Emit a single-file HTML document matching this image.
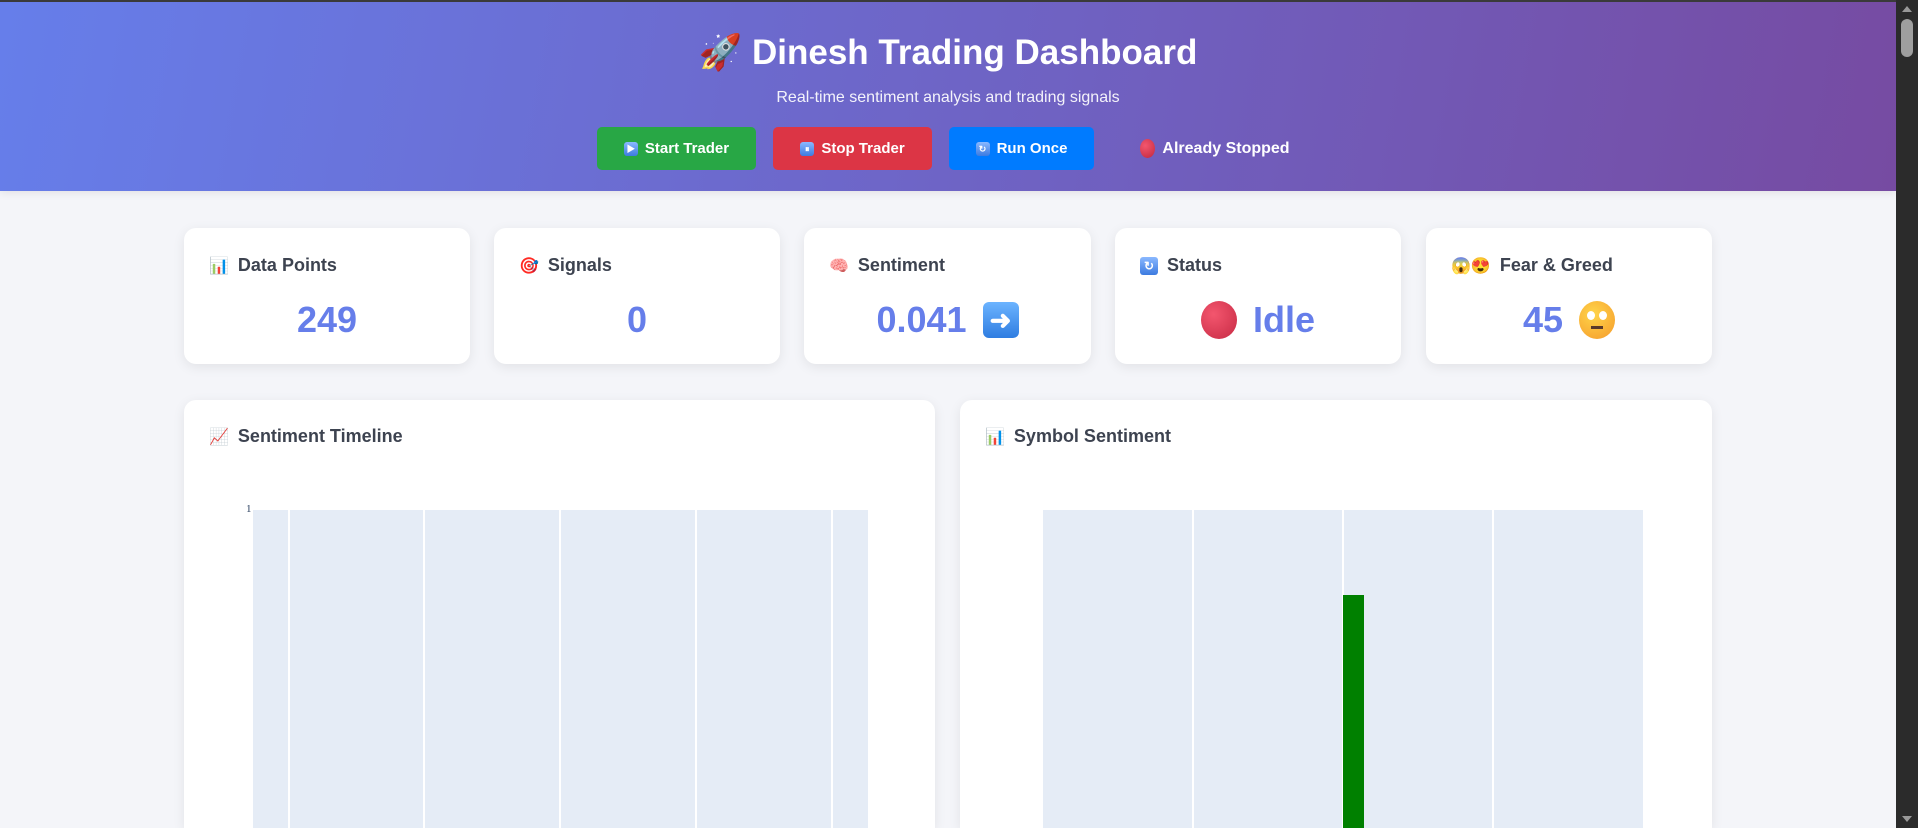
<!DOCTYPE html>
<html style="width:1918px;height:828px;overflow:hidden"><head><meta charset="utf-8"><style>
*{box-sizing:border-box;margin:0;padding:0}
body{width:1918px;height:828px;overflow:hidden;background:#f4f5f9;font-family:"Liberation Sans","Noto Sans CJK SC",sans-serif;position:relative}
.hdr{position:absolute;left:0;top:0;width:1896px;height:191px;background:linear-gradient(100deg,#667eea 0%,#764ba2 100%);border-top:2px solid #3a3a3a;box-shadow:0 2px 8px rgba(0,0,0,.08)}
.title{position:absolute;top:30px;left:0;width:1896px;text-align:center;color:#fff;font-size:35px;font-weight:bold}
.sub{position:absolute;top:87px;left:0;width:1896px;text-align:center;color:rgba(255,255,255,.92);font-size:16px}
.btn{position:absolute;top:125px;height:43px;border-radius:5px;color:#fff;font-weight:bold;font-size:15px;display:flex;align-items:center;justify-content:center;gap:7px}
.ic{display:inline-block;width:14px;height:14px;border-radius:3px;background:linear-gradient(#8ab8ff,#3d7be0);color:#fff;font-size:9px;line-height:14px;text-align:center}
.card{position:absolute;background:#fff;border-radius:12px;box-shadow:0 3px 12px rgba(0,0,0,.08)}
.ct{position:absolute;left:25px;top:27px;font-size:18px;font-weight:bold;color:#3d4350;display:flex;align-items:center;gap:9px}
.val{position:absolute;left:0;right:0;top:71px;text-align:center;font-size:36px;font-weight:bold;color:#667eea;display:flex;justify-content:center;align-items:center;gap:16px}
.em{font-size:16px}
.plot{position:absolute;background:#e5ecf6;top:110px;bottom:0}
.gl{position:absolute;top:0;bottom:0;width:2px;background:#fff}
.sb{position:absolute;right:0;top:0;width:22px;height:828px;background:#2b2b2b}
</style></head><body>
<div class="hdr">
<div class="title">🚀 Dinesh Trading Dashboard</div>
<div class="sub">Real-time sentiment analysis and trading signals</div>
<div class="btn" style="left:597px;width:159px;background:#28a745"><span class="ic">▶</span>Start Trader</div>
<div class="btn" style="left:773px;width:159px;background:#dc3545"><span class="ic">⏸</span>Stop Trader</div>
<div class="btn" style="left:949px;width:145px;background:#007bff"><span class="ic">↻</span>Run Once</div>
<div class="btn" style="left:1125px;width:180px;font-size:16px"><span style="display:inline-block;width:15px;height:19px;border-radius:50%;background:radial-gradient(circle at 35% 35%,#f3566e,#c0283e)"></span>Already Stopped</div>
</div>
<div class="card" style="left:184px;top:228px;width:286px;height:136px"><div class="ct"><span class="em">📊</span>Data Points</div><div class="val">249</div></div>
<div class="card" style="left:494px;top:228px;width:286px;height:136px"><div class="ct"><span class="em">🎯</span>Signals</div><div class="val">0</div></div>
<div class="card" style="left:804px;top:228px;width:287px;height:136px"><div class="ct"><span class="em">🧠</span>Sentiment</div><div class="val">0.041 <span style="display:inline-block;width:36px;height:36px;border-radius:6px;background:linear-gradient(#6cb4ff,#2f7de1);color:#fff;font-size:26px;line-height:36px">➜</span></div></div>
<div class="card" style="left:1115px;top:228px;width:286px;height:136px"><div class="ct"><span class="ic" style="width:18px;height:18px;line-height:18px;font-size:12px">↻</span>Status</div><div class="val"><span style="display:inline-block;width:36px;height:38px;border-radius:50%;background:radial-gradient(circle at 35% 35%,#f3566e,#c72a44)"></span>Idle</div></div>
<div class="card" style="left:1426px;top:228px;width:286px;height:136px"><div class="ct"><span class="em">😱😍</span>Fear &amp; Greed</div><div class="val">45 <span style="display:inline-block;width:36px;height:38px;border-radius:50%;background:radial-gradient(circle at 40% 35%,#ffd54a,#f59a2b);position:relative"><span style="position:absolute;left:8px;top:10px;width:8px;height:9px;background:#fff;border-radius:50%"></span><span style="position:absolute;left:20px;top:10px;width:8px;height:9px;background:#fff;border-radius:50%"></span><span style="position:absolute;left:12px;top:25px;width:12px;height:3px;background:#5a3a2a"></span></span></div></div>
<div class="card" style="left:184px;top:400px;width:751px;height:428px;border-radius:12px 12px 0 0"><div class="ct" style="top:26px"><span class="em">📈</span>Sentiment Timeline</div>
<div style="position:absolute;left:62px;top:103px;font-size:11px;color:#2a3f5f;font-family:'Liberation Serif',serif">1</div>
<div class="plot" style="left:69px;width:615px"><div class="gl" style="left:35px"></div><div class="gl" style="left:170px"></div><div class="gl" style="left:306px"></div><div class="gl" style="left:442px"></div><div class="gl" style="left:578px"></div></div></div>
<div class="card" style="left:960px;top:400px;width:752px;height:428px;border-radius:12px 12px 0 0"><div class="ct" style="top:26px"><span class="em">📊</span>Symbol Sentiment</div>
<div class="plot" style="left:83px;width:600px"><div class="gl" style="left:149px"></div><div class="gl" style="left:299px"></div><div class="gl" style="left:449px"></div><div style="position:absolute;left:300px;top:85px;width:21px;bottom:0;background:#008000"></div></div></div>
<div class="sb"><div style="position:absolute;left:6px;top:6px;border:5px solid transparent;border-bottom:6px solid #999;border-top:0"></div><div style="position:absolute;left:5px;top:19px;width:12px;height:38px;border-radius:6px;background:#9f9f9f"></div><div style="position:absolute;left:6px;bottom:6px;border:5px solid transparent;border-top:6px solid #999;border-bottom:0"></div></div>
</body></html>
